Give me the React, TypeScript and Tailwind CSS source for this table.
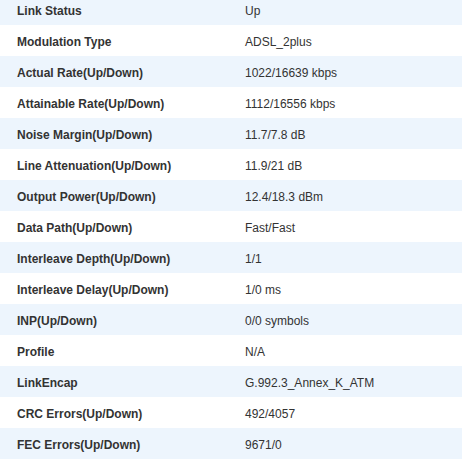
const ROWS: [string, string][] = [
  ["Link Status", "Up"],
  ["Modulation Type", "ADSL_2plus"],
  ["Actual Rate(Up/Down)", "1022/16639 kbps"],
  ["Attainable Rate(Up/Down)", "1112/16556 kbps"],
  ["Noise Margin(Up/Down)", "11.7/7.8 dB"],
  ["Line Attenuation(Up/Down)", "11.9/21 dB"],
  ["Output Power(Up/Down)", "12.4/18.3 dBm"],
  ["Data Path(Up/Down)", "Fast/Fast"],
  ["Interleave Depth(Up/Down)", "1/1"],
  ["Interleave Delay(Up/Down)", "1/0 ms"],
  ["INP(Up/Down)", "0/0 symbols"],
  ["Profile", "N/A"],
  ["LinkEncap", "G.992.3_Annex_K_ATM"],
  ["CRC Errors(Up/Down)", "492/4057"],
  ["FEC Errors(Up/Down)", "9671/0"],
];

export default function App() {
  return (
    <div className="w-[462px] h-[464px] overflow-hidden bg-white font-['Liberation_Sans',Arial,sans-serif] text-[12px] text-[#333]">
      <div className="-mt-[6px]">
        {ROWS.map(([label, value], i) => (
          <div key={label} className={`flex h-[31px] items-center pt-[2px] ${i % 2 === 0 ? "bg-[#edf5fd]" : "bg-white"}`}>
            <div className="w-[245px] pl-[17px] font-bold">{label}</div>
            <div>{value}</div>
          </div>
        ))}
      </div>
    </div>
  );
}
